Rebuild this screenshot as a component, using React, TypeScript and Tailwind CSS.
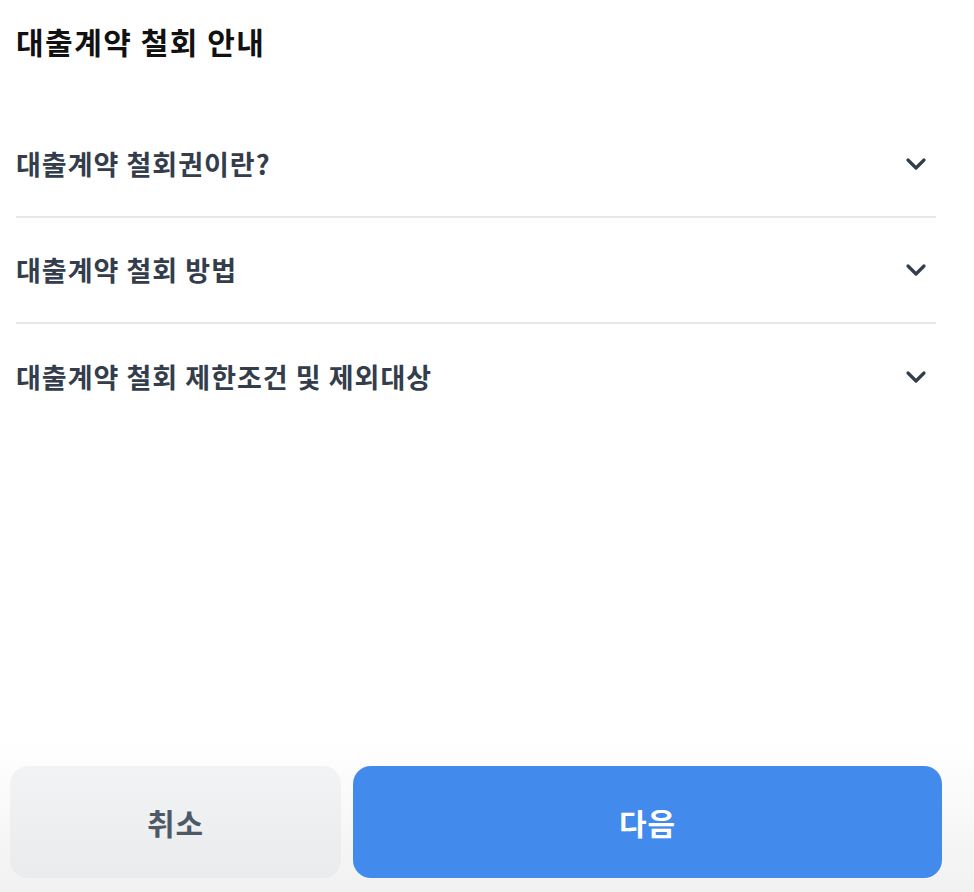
import { ChevronDown } from 'lucide-react';

const items = ['대출계약 철회권이란?', '대출계약 철회 방법', '대출계약 철회 제한조건 및 제외대상'];

const font = { fontFamily: '"Noto Sans CJK KR", "Noto Sans", sans-serif' };

export default function App() {
  return (
    <div className="flex h-screen flex-col bg-white" style={font}>
      <div className="px-4 pt-[22px]">
        <h1 className="text-[30px] leading-[38px] font-bold tracking-[1.5px] text-[#111111]">대출계약 철회 안내</h1>
      </div>

      <div className="mt-[52px] px-4 pr-[38px]">
        {items.map((label, index) => (
          <button
            key={label}
            className={[
              'flex h-[106px] w-full items-center justify-between text-left',
              index < items.length - 1 ? 'border-b-2 border-[#e5e8eb]' : '',
            ].join(' ')}
          >
            <span className="text-[27px] leading-8 font-bold tracking-[1px] text-[#333d4b]">{label}</span>
            <ChevronDown className="mr-1 h-8 w-8 text-[#333d4b]" strokeWidth={2.4} />
          </button>
        ))}
      </div>

      <div className="mt-auto flex gap-3 bg-gradient-to-b from-white to-[#f1f1f1] pt-6 pr-8 pb-[14px] pl-[10px]">
        <button className="h-[112px] w-[331px] rounded-[18px] bg-gradient-to-b from-[#f2f3f5] to-[#eaebed] text-[30px] font-bold tracking-[1px] text-[#4e5968]">
          취소
        </button>
        <button className="h-[112px] flex-1 rounded-[18px] bg-[#438aed] text-[30px] font-bold tracking-[1px] text-white">
          다음
        </button>
      </div>
    </div>
  );
}
